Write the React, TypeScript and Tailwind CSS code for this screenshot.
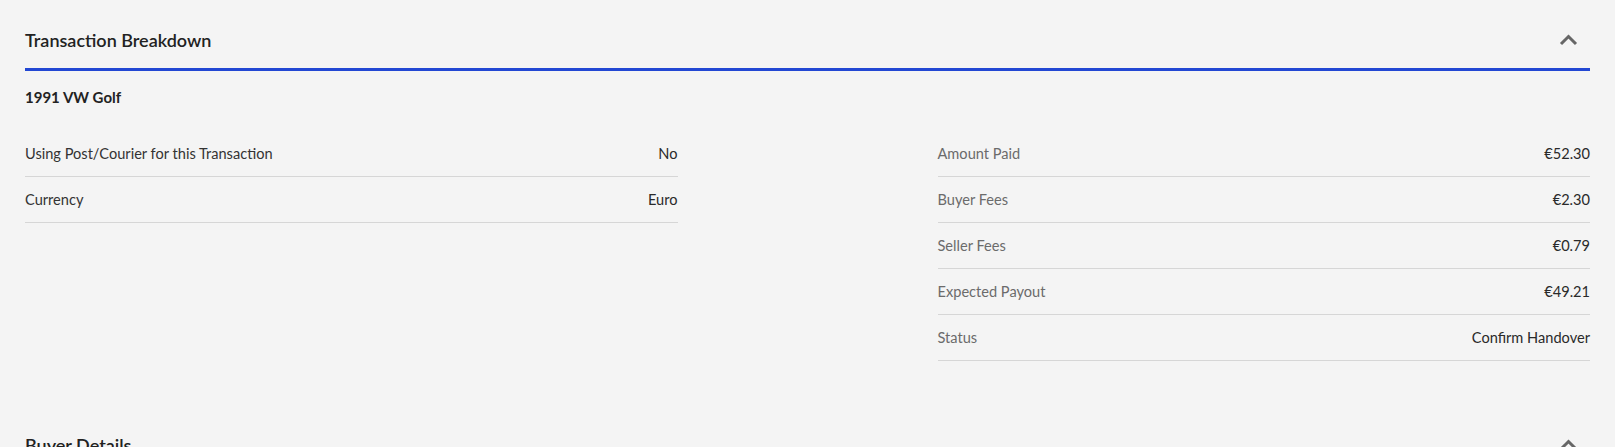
import React from "react";

type Row = { label: string; value: string };

const LEFT_ROWS: Row[] = [
  { label: "Using Post/Courier for this Transaction", value: "No" },
  { label: "Currency", value: "Euro" },
];

const RIGHT_ROWS: Row[] = [
  { label: "Amount Paid", value: "€52.30" },
  { label: "Buyer Fees", value: "€2.30" },
  { label: "Seller Fees", value: "€0.79" },
  { label: "Expected Payout", value: "€49.21" },
  { label: "Status", value: "Confirm Handover" },
];

function Chevron() {
  return (
    <svg width="19" height="12" viewBox="0 0 19 12" fill="none" className="text-[#666]">
      <polyline points="2,10 9.5,2.5 17,10" stroke="currentColor" strokeWidth="3" strokeLinejoin="miter" />
    </svg>
  );
}

function SectionHeader({ title, active }: { title: string; active?: boolean }) {
  return (
    <div
      className={`flex items-center justify-between pt-[26px] pb-[14px] ${
        active ? "border-b-[3px] border-[#2247d3]" : ""
      }`}
    >
      <h2 className="text-[18px] leading-[28px] font-semibold text-[#222]">{title}</h2>
      <div className="pr-[12px]">
        <Chevron />
      </div>
    </div>
  );
}

function DetailRow({ row, muted }: { row: Row; muted?: boolean }) {
  return (
    <div className="flex h-[46px] items-center justify-between border-b border-[#d6d6d6] text-[14.6px]">
      <span className={muted ? "text-[#6b6b6b]" : "text-[#333]"}>{row.label}</span>
      <span className="text-[#2a2a2a]">{row.value}</span>
    </div>
  );
}

export default function App() {
  return (
    <div className="min-h-screen bg-[#f4f4f4] px-[25px] font-['Lato',sans-serif] overflow-hidden">
      <section className="pb-[44px]">
        <SectionHeader title="Transaction Breakdown" active />
        <p className="mt-[16px] text-[15px] leading-5 font-bold text-[#222]">1991 VW Golf</p>

        <div className="mt-[24px] grid grid-cols-2 gap-x-[260px]">
          <div className="flex flex-col">
            {LEFT_ROWS.map((r) => (
              <DetailRow key={r.label} row={r} />
            ))}
          </div>
          <div className="flex flex-col">
            {RIGHT_ROWS.map((r) => (
              <DetailRow key={r.label} row={r} muted />
            ))}
          </div>
        </div>
      </section>

      <section>
        <SectionHeader title="Buyer Details" />
      </section>
    </div>
  );
}
